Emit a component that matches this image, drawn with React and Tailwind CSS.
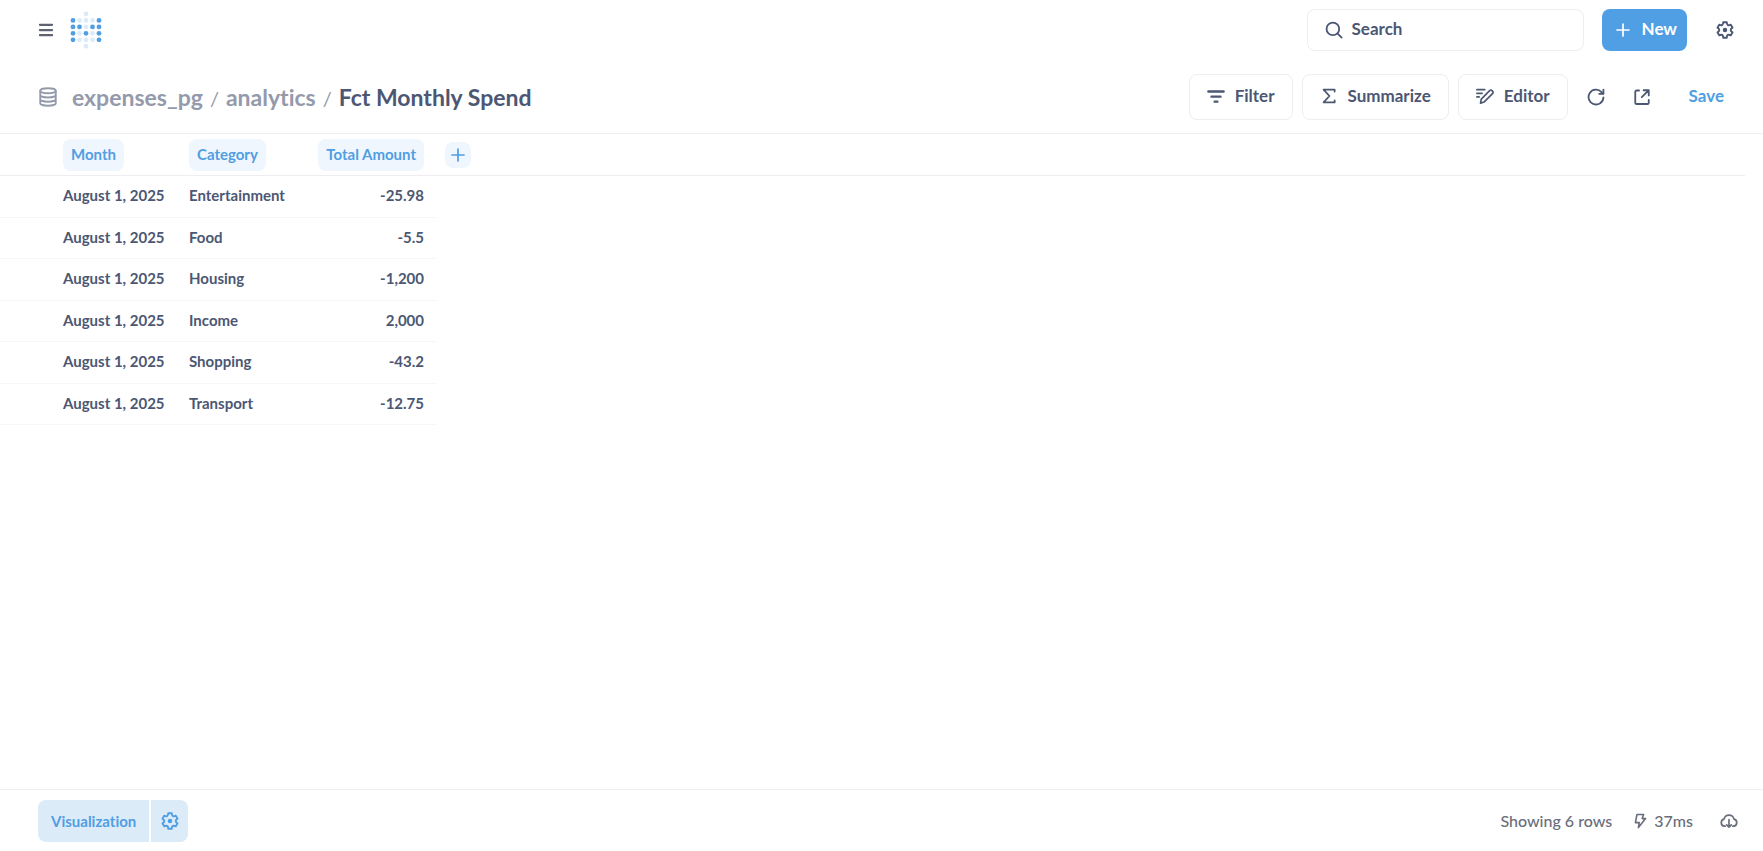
import React from "react";

const rows = [
  ["August 1, 2025", "Entertainment", "-25.98"],
  ["August 1, 2025", "Food", "-5.5"],
  ["August 1, 2025", "Housing", "-1,200"],
  ["August 1, 2025", "Income", "2,000"],
  ["August 1, 2025", "Shopping", "-43.2"],
  ["August 1, 2025", "Transport", "-12.75"],
];

// One string per row of the logo: "x" solid dot, "o" pale dot, "." empty
const logoDots = ["..o..", "xooox", "xxoxx", "xoxox", "xooox", "..o.."];

function Logo() {
  return (
    <svg width="32" height="38" viewBox="0 0 32 38" aria-hidden="true">
      {logoDots.flatMap((line, r) =>
        [...line].map((dot, c) =>
          dot === "." ? null : (
            <circle
              key={`${r}-${c}`}
              cx={3 + c * 6.5}
              cy={3 + r * 6.45}
              r="2.4"
              fill={dot === "x" ? "#509ee3" : "#dcebf8"}
            />
          )
        )
      )}
    </svg>
  );
}

function Icon({ size = 16, sw = 1.5, children }) {
  return (
    <svg
      width={size}
      height={size}
      viewBox="0 0 16 16"
      fill="none"
      stroke="currentColor"
      strokeWidth={sw}
      strokeLinecap="round"
      strokeLinejoin="round"
      className="shrink-0"
      aria-hidden="true"
    >
      {children}
    </svg>
  );
}

// Outline of a six-toothed gear: flat teeth joined by curved valleys
function gearPath() {
  const at = (deg, r) => {
    const a = ((deg - 90) * Math.PI) / 180;
    return `${(8 + r * Math.cos(a)).toFixed(2)} ${(8 + r * Math.sin(a)).toFixed(2)}`;
  };
  let d = `M${at(-13, 7)}`;
  for (let t = 0; t < 360; t += 60) {
    d += `L${at(t + 13, 7)}C${at(t + 20, 4.6)} ${at(t + 40, 4.6)} ${at(t + 47, 7)}`;
  }
  return `${d}Z`;
}

function Gear() {
  return (
    <Icon size={18} sw={1.7}>
      <path d={gearPath()} />
      <circle cx="8" cy="8" r="2" fill="currentColor" stroke="none" />
    </Icon>
  );
}

function Plus() {
  return (
    <Icon size={16} sw={1.7}>
      <path d="M8 2v12M2 8h12" />
    </Icon>
  );
}

function ToolButton({ icon, children }) {
  return (
    <button className="flex h-[46px] items-center gap-[10px] rounded-lg border border-[#eeeef0] px-[17px] pb-[2px] text-[17px] font-bold">
      {icon}
      {children}
    </button>
  );
}

function HeaderPill({ children }) {
  return (
    <button className="h-8 rounded-lg bg-[#f0f6fd] px-2 font-bold text-[#509ee3]">
      {children}
    </button>
  );
}

export default function App() {
  return (
    <div className="flex min-h-screen flex-col bg-white font-['Lato',sans-serif] text-[#4c5773] [font-variant-ligatures:none]">
      <header className="flex h-[60px] items-center pr-[29px] pl-[37px]">
        <button aria-label="Toggle sidebar" className="mr-[15px] text-[#5f6470]">
          <Icon size={18} sw={2}>
            <path d="M2.600 3.400h10.800M2.600 8h10.800M2.600 12.600h10.800" />
          </Icon>
        </button>
        <a href="#" aria-label="Home">
          <Logo />
        </a>
        <label className="ml-auto flex h-[42px] w-[277px] items-center gap-[9px] rounded-lg border border-[#eeeef0] pl-[17px]">
          <Icon size={18} sw={1.6}>
            <circle cx="7" cy="7" r="5.6" />
            <path d="m11.200 11.200 3.600 3.600" />
          </Icon>
          <input
            type="text"
            aria-label="Search"
            placeholder="Search"
            className="w-full min-w-0 bg-transparent pb-[2px] text-[17px] font-bold outline-none placeholder:text-[#4c5773] placeholder:opacity-100"
          />
        </label>
        <button className="ml-[18px] flex h-[42px] items-center gap-[11px] rounded-lg bg-[#509ee3] pr-[10px] pl-[13px] text-[17px] font-bold text-white">
          <Plus />
          <span className="pb-[2px]">New</span>
        </button>
        <button aria-label="Settings" className="ml-[29px]">
          <Gear />
        </button>
      </header>

      <div className="flex h-[74px] items-center border-b border-[#eeeef0] pr-[39px] pl-[38px]">
        <span className="mr-[14px] text-[#949aab]">
          <Icon size={20} sw={1.5}>
            <ellipse cx="8" cy="3" rx="6.2" ry="2" />
            <path d="M1.800 3v10c0 1.100 2.800 2 6.200 2s6.200-.9 6.200-2V3M1.800 6.400c0 1.100 2.800 2 6.200 2s6.200-.9 6.200-2M1.800 9.800c0 1.100 2.800 2 6.200 2s6.200-.9 6.200-2" />
          </Icon>
        </span>
        <nav className="flex items-center gap-[7px] pt-[2px] text-[23px] font-bold text-[#949aab]">
          <a href="#">expenses_pg</a>
          <span className="text-xl font-normal">/</span>
          <a href="#">analytics</a>
          <span className="text-xl font-normal">/</span>
          <h1 className="text-[#4c5773]">Fct Monthly Spend</h1>
        </nav>
        <div className="ml-auto flex items-center gap-[9px]">
          <ToolButton
            icon={
              <Icon size={18} sw={2.1}>
                <path d="M1.200 4h13.600M4 8.600h8M6.800 13h2.400" />
              </Icon>
            }
          >
            Filter
          </ToolButton>
          <ToolButton
            icon={
              <Icon size={18} sw={1.6}>
                <path d="M13 4V2.300H3.200L8.400 8l-5.200 5.700H13V12" />
              </Icon>
            }
          >
            Summarize
          </ToolButton>
          <ToolButton
            icon={
              <Icon size={18} sw={1.5}>
                <path d="M.8 2.400h7M.8 5.600h4.600M.8 8.800h2" />
                <path d="m4 14.300.7-3.600 7.400-7.400a1.500 1.500 0 0 1 2.200 0l.4.4a1.500 1.500 0 0 1 0 2.200l-7.400 7.400z" />
              </Icon>
            }
          >
            Editor
          </ToolButton>
        </div>
        <button aria-label="Refresh" className="ml-[19px]">
          <Icon size={18} sw={1.6}>
            <path d="M14.600 8.400A6.600 6.600 0 1 1 12.900 3.600l1.500 1.500" />
            <path d="M14.600 1.400v3.800h-3.800" />
          </Icon>
        </button>
        <button aria-label="Open in new window" className="ml-7">
          <Icon size={18} sw={1.6}>
            <path d="M5.400 2.200H3.200A1.200 1.200 0 0 0 2 3.400v9.600a1.200 1.200 0 0 0 1.200 1.200h9.600a1.200 1.200 0 0 0 1.200-1.200v-2.400" />
            <path d="M9.400 2H14v4.600M13.800 2.200 7.800 8.200" />
          </Icon>
        </button>
        <button className="ml-[38px] pb-[2px] text-[17px] font-bold text-[#509ee3]">Save</button>
      </div>

      <main className="flex-1 pr-[18px]">
        <table className="h-[291px] w-full table-fixed border-separate border-spacing-0 text-[15px] font-bold">
          <colgroup>
            <col className="w-44" />
            <col className="w-[120px]" />
            <col className="w-[141px]" />
            <col />
          </colgroup>
          <thead>
            <tr className="h-[42px]">
              <th className="border-b border-[#eeeef0] p-0 pl-[63px] text-left">
                <HeaderPill>Month</HeaderPill>
              </th>
              <th className="border-b border-[#eeeef0] p-0 pl-[13px] text-left">
                <HeaderPill>Category</HeaderPill>
              </th>
              <th className="border-b border-[#eeeef0] p-0 pr-[13px] text-right">
                <HeaderPill>Total Amount</HeaderPill>
              </th>
              <th className="border-b border-[#eeeef0] p-0 pl-2 text-left">
                <button
                  aria-label="Add column"
                  className="flex size-[26px] items-center justify-center rounded-lg bg-[#f0f6fd] text-[#509ee3]"
                >
                  <Plus />
                </button>
              </th>
            </tr>
          </thead>
          <tbody>
            {rows.map(([month, category, amount]) => (
              <tr key={category}>
                <td className="border-b border-[#f7f7f8] p-0 pb-[2px] pl-[63px]">{month}</td>
                <td className="border-b border-[#f7f7f8] p-0 pb-[2px] pl-[13px]">{category}</td>
                <td className="border-b border-[#f7f7f8] p-0 pr-[13px] pb-[2px] text-right">{amount}</td>
                <td />
              </tr>
            ))}
          </tbody>
        </table>
      </main>

      <footer className="flex items-center border-t border-[#eeeef0] pt-[10px] pr-[25px] pb-[9px] pl-[38px] text-[#696e7b]">
        <div className="flex gap-[2px] text-[#509ee3]">
          <button className="h-[42px] rounded-l-lg bg-[#dcebf8] px-[13px] text-[15px] font-bold">
            Visualization
          </button>
          <button
            aria-label="Visualization settings"
            className="flex h-[42px] w-[37px] items-center justify-center rounded-r-lg bg-[#dcebf8]"
          >
            <Gear />
          </button>
        </div>
        <span className="ml-auto text-base font-medium">Showing 6 rows</span>
        <span className="ml-5 flex items-center gap-[6px] text-base font-medium">
          <Icon size={16} sw={1.6}>
            <path d="M5 1.500h6.600L10.200 5.600h3.400L6.400 14.600l.8-5H3.400z" />
          </Icon>
          37ms
        </span>
        <button aria-label="Download results" className="ml-[27px]">
          <Icon size={18} sw={1.5}>
            <path d="M4.600 12.600H4a3.200 3.200 0 0 1-.4-6.300 4.500 4.500 0 0 1 8.800 0 3.200 3.200 0 0 1-.4 6.300h-.6" />
            <path d="M8 6.800v6.600M5.900 11.400 8 13.500l2.100-2.100" />
          </Icon>
        </button>
      </footer>
    </div>
  );
}
